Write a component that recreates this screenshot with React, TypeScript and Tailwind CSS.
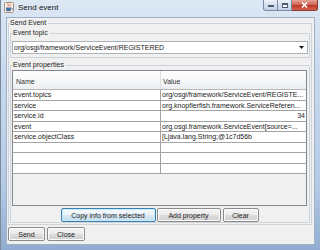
import clsx from "clsx";

const rows: [string, string, boolean?][] = [
    ["event.topics", "org/osgi/framework/ServiceEvent/REGISTE..."],
    ["service", "org.knopflerfish.framework.ServiceReferen..."],
    ["service.id", "34", true],
    ["event", "org.osgi.framework.ServiceEvent[source=..."],
    ["service.objectClass", "[Ljava.lang.String;@1c7d56b"],
    ["", ""],
    ["", ""],
    ["", ""],
];

const WinButton = ({
    label,
    className,
    focused,
}: {
    label: string;
    className: string;
    focused?: boolean;
}) => (
    <button
        className={clsx(
            "h-[14px] rounded-[2px] border text-[7px] leading-none text-[#1b1b1b]",
            focused
                ? "border-[#3c7fb1] bg-[linear-gradient(#f4f9fc_0%,#e9f3f9_50%,#d6e8f3_50%,#c7def0_100%)] shadow-[inset_0_0_0_1px_#c5ecfb]"
                : "border-[#8b8b8b] bg-[linear-gradient(#f3f3f3_0%,#ebebeb_50%,#dddddd_50%,#d0d0d0_100%)] shadow-[inset_0_0_0_1px_#fcfcfc]",
            className
        )}
    >
        {label}
    </button>
);

const JavaIcon = () => (
    <svg width="10" height="11" viewBox="0 0 10 11">
        <rect x="0.5" y="0.5" width="9" height="10" rx="1" fill="#f6efe6" stroke="#a98f7a" />
        <path d="M4 1.5c-1 1 1 1.5 0 3M6 2c-.8.8.8 1.2 0 2.4" stroke="#d8452e" strokeWidth="0.8" fill="none" />
        <path d="M2 5.5h5v2.2c0 1-1 1.6-2.5 1.6S2 8.7 2 7.7z" fill="#4a6fa5" />
        <path d="M7 6h.8a.8.8 0 010 1.6H7" stroke="#4a6fa5" strokeWidth="0.6" fill="none" />
    </svg>
);

export default function App() {
    return (
        <div className="w-[320px] h-[250px] overflow-hidden bg-[linear-gradient(180deg,#dde8f5_0%,#c8d9ee_30%,#b3cae5_75%,#90acd0_100%)] border-l border-[#7d8a9b] font-['Liberation_Sans',Arial,sans-serif] text-[#1b1b1b]">
            {/* title bar */}
            <div className="h-[17px] flex items-start">
                <div className="mt-[2px] ml-[3px]">
                    <JavaIcon />
                </div>
                <span className="ml-[4px] mt-[3px] text-[8px] leading-[10px] text-[#111]">
                    Send event
                </span>
                <div className="ml-auto mr-[2px] flex">
                    <div className="w-[15px] h-[11px] rounded-bl-[3px] border border-t-0 border-[#7a8ba3] bg-[linear-gradient(#eef3f9,#d3dfee_50%,#c2d2e6)] flex items-end justify-center pb-[3px]">
                        <div className="w-[6px] h-[2px] bg-white border border-[#4d5c72]" />
                    </div>
                    <div className="w-[14px] h-[11px] border border-t-0 border-l-0 border-[#7a8ba3] bg-[linear-gradient(#eef3f9,#d3dfee_50%,#c2d2e6)] flex items-center justify-center">
                        <div className="w-[6px] h-[5px] border border-[#4d5c72] bg-white shadow-[inset_0_1px_0_#4d5c72]" />
                    </div>
                    <div className="w-[26px] h-[11px] rounded-br-[3px] border border-t-0 border-l-0 border-[#8a3b33] bg-[linear-gradient(#e6a596,#d0685a_45%,#c0392b_55%,#d6604f)] flex items-center justify-center">
                        <svg width="7" height="6" viewBox="0 0 7 6">
                            <path d="M1 0.5l5 5M6 0.5l-5 5" stroke="#fff" strokeWidth="1.6" />
                        </svg>
                    </div>
                </div>
            </div>

            {/* content */}
            <div className="ml-[5px] w-[309px] h-[228px] border border-[#9fb1c6] bg-[#f0f0f0] text-[7px] leading-[8px]">
                <fieldset className="mt-[1px] ml-[1px] w-[304px] border border-[#cdd4db] px-[1px] pt-[2px] pb-[1px]">
                    <legend className="pr-[2px] text-[#222]">Send Event</legend>

                    <fieldset className="w-full border border-[#cdd4db] px-[1px] pt-[4px] pb-[3px]">
                        <legend className="ml-[1px] pr-[2px] text-[#222]">Event topic</legend>
                        <div className="h-[13px] border border-[#adb2b8] bg-white flex items-center pl-[1px] pr-[3px]">
                            <span className="flex-1 whitespace-nowrap">
                                org/osgi/framework/ServiceEvent/REGISTERED
                            </span>
                            <svg width="5" height="3" viewBox="0 0 5 3">
                                <path d="M0 0h5L2.5 3z" fill="#111" />
                            </svg>
                        </div>
                    </fieldset>

                    <fieldset className="mt-[3px] w-full border border-[#cdd4db] px-[1px] pt-[1px] pb-0">
                        <legend className="ml-[1px] pr-[2px] text-[#222]">Event properties</legend>
                        {/* table */}
                        <div className="w-[295px] h-[136px] border border-[#828790] bg-[#f0f0f0] flex flex-col">
                            <div className="h-[19px] flex border-b border-[#b8b8b8] bg-[linear-gradient(#ffffff,#f6f7f8_50%,#eceef1)]">
                                <div className="w-[148px] border-r border-[#dcdfe3] pl-[3px] pt-[7px] text-[#333]">
                                    Name
                                </div>
                                <div className="flex-1 pl-[2px] pt-[7px] text-[#333]">Value</div>
                            </div>
                            {rows.map(([name, value, right], i) => (
                                <div
                                    key={i}
                                    className={clsx(
                                        "flex bg-white border-b border-[#a3a3a3]",
                                        i % 2 === 0 ? "h-[11px]" : "h-[10px]"
                                    )}
                                >
                                    <div className="w-[148px] border-r border-[#a3a3a3] pl-[1px] flex items-center whitespace-nowrap overflow-hidden">
                                        {name}
                                    </div>
                                    <div
                                        className={clsx(
                                            "flex-1 px-[1px] flex items-center whitespace-nowrap overflow-hidden",
                                            right && "justify-end"
                                        )}
                                    >
                                        {value}
                                    </div>
                                </div>
                            ))}
                        </div>
                        <div className="mt-[2px] flex justify-center gap-[1px] pr-[1px]">
                            <WinButton label="Copy info from selected" className="w-[95px]" focused />
                            <WinButton label="Add property" className="w-[64px]" />
                            <WinButton label="Clear" className="ml-[1px] w-[36px]" />
                        </div>
                    </fieldset>
                </fieldset>

                <div className="mt-[2px] ml-[1px] flex gap-[2px]">
                    <WinButton label="Send" className="w-[37px]" />
                    <WinButton label="Close" className="w-[38px]" />
                </div>
            </div>
        </div>
    );
}
